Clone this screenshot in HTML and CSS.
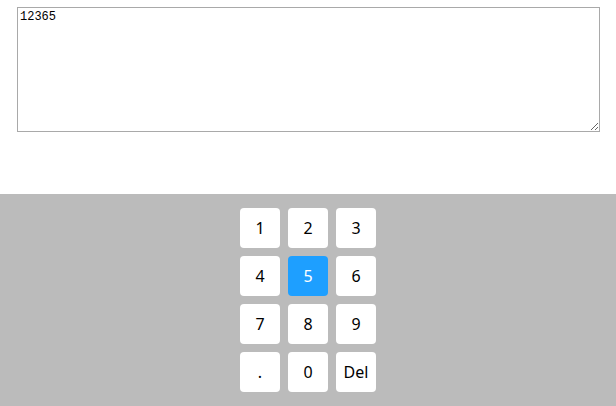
FILE: index.html
```html
<!DOCTYPE html>
<html lang="zh">
<head>
    <meta charset="UTF-8">
    <title>数字键盘</title>
    <link rel="stylesheet" href="styles.css">
</head>
<body>
    <textarea class="display">12365</textarea>

    <!-- 数字键盘 -->
    <div class="keyboard">
        <div class="keys">
            <button class="key">1</button>
            <button class="key">2</button>
            <button class="key">3</button>
            <button class="key">4</button>
            <button class="key active">5</button>
            <button class="key">6</button>
            <button class="key">7</button>
            <button class="key">8</button>
            <button class="key">9</button>
            <button class="key">.</button>
            <button class="key">0</button>
            <button class="key">Del</button>
        </div>
    </div>
</body>
</html>
```

FILE: styles.css
```css
body {
    margin: 0;
    padding: 7px 16px 0 17px;
    background: white;
}

.display {
    display: block;
    width: 583px;
    height: 125px;
    box-sizing: border-box;
    margin: 0;
    padding: 2px;
    border: 1px solid #a9a9a9;
    font-family: "Liberation Mono", monospace;
    font-size: 12px;
}

.keyboard {
    position: fixed;
    left: 0;
    right: 0;
    bottom: 0;
    height: 212px;
    box-sizing: border-box;
    padding: 10px 0;
    background-color: #bbbbbb;
}

.keys {
    display: grid;
    grid-template-columns: repeat(3, 40px);
    gap: 8px;
    width: 136px;
    margin: 4px auto;
}

.key {
    width: 40px;
    height: 40px;
    padding: 0;
    border: none;
    border-radius: 4px;
    background: white;
    color: #000;
    font-family: "Noto Sans", sans-serif;
    font-size: 16px;
}

.key.active {
    background-color: #1e9fff;
    color: white;
}
```
